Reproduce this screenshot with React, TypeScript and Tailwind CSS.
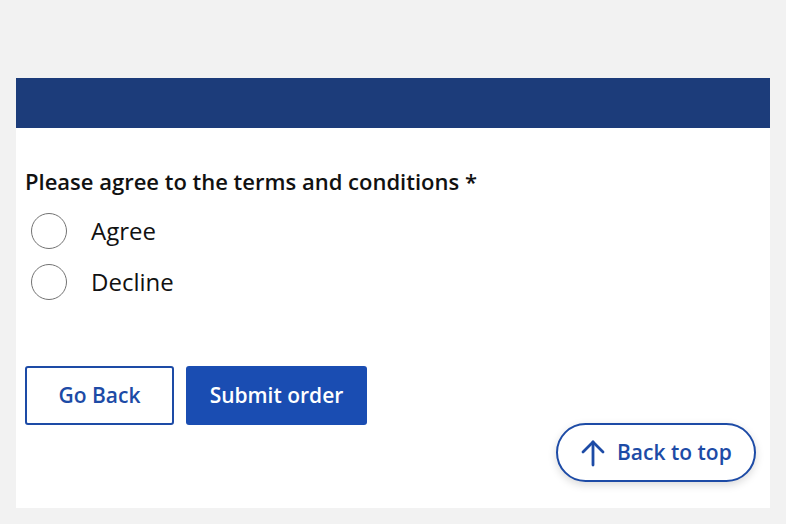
import React from "react";

export default function App() {
  return (
    <div
      className="relative w-[786px] h-[524px] bg-[#f2f2f2] overflow-hidden"
      style={{ fontFamily: '"Open Sans", "Noto Sans", sans-serif' }}
    >
      <div className="absolute left-[16px] top-[78px] w-[754px] h-[430px] bg-white flex flex-col">
        <div className="h-[50px] bg-[#1c3c7a]" />
        <div className="px-[9px] pt-[38px] flex flex-col">
          <div className="text-[22px] font-semibold text-[#111] leading-[30px]">
            Please agree to the terms and conditions *
          </div>
          <div className="mt-[18px] flex flex-col gap-[17px]">
            <label className="flex items-center h-[34px]">
              <span className="ml-[6px] w-[36px] h-[36px] shrink-0 rounded-full border-[1.5px] border-[#737373] bg-white" />
              <span className="ml-[24px] text-[24px] text-[#111]">Agree</span>
            </label>
            <label className="flex items-center h-[34px]">
              <span className="ml-[6px] w-[36px] h-[36px] shrink-0 rounded-full border-[1.5px] border-[#737373] bg-white" />
              <span className="ml-[24px] text-[24px] text-[#111]">Decline</span>
            </label>
          </div>
          <div className="mt-[67px] flex gap-[12px]">
            <button className="w-[149px] h-[59px] rounded-[3px] border-2 border-[#1d4ba6] bg-white text-[#1d4ba6] text-[21px] font-semibold">
              Go Back
            </button>
            <button className="w-[181px] h-[59px] rounded-[3px] bg-[#1a4db2] text-white text-[21px] font-semibold">
              Submit order
            </button>
          </div>
        </div>
      </div>
      <button className="absolute left-[556px] top-[423px] w-[200px] h-[59px] rounded-full border-2 border-[#1d4ba6] bg-white shadow-[0_3px_8px_rgba(0,0,0,0.15)] flex items-center pl-[23px] gap-[12px] text-[#1d4ba6] text-[21px] font-semibold">
        <svg width="24" height="28" viewBox="0 0 24 28" fill="none" stroke="currentColor" strokeWidth="2.8" strokeLinecap="round" strokeLinejoin="round">
          <path d="M12 26V3" />
          <path d="M2 13L12 3l10 10" />
        </svg>
        <span>Back to top</span>
      </button>
    </div>
  );
}
